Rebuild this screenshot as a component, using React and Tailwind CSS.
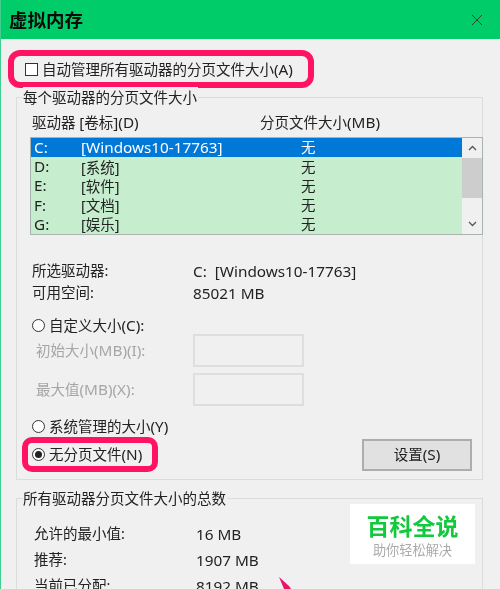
const drives = [
  { letter: "C:", name: "[Windows10-17763]", size: "无", selected: true },
  { letter: "D:", name: "[系统]", size: "无" },
  { letter: "E:", name: "[软件]", size: "无" },
  { letter: "F:", name: "[文档]", size: "无" },
  { letter: "G:", name: "[娱乐]", size: "无" },
];

// latin runs are a touch wider than the CJK next to them in the picture
function L({ children }) {
  return <span className="text-[15.3px]">{children}</span>;
}

function Radio({ checked }) {
  return (
    <span className="w-[13px] h-[13px] rounded-full border border-[#333] bg-white flex items-center justify-center shrink-0">
      {checked && <span className="w-[7px] h-[7px] rounded-full bg-[#222]" />}
    </span>
  );
}

function Scrollbar() {
  return (
    <div className="w-[20px] shrink-0 bg-[#f0f0f0] flex flex-col">
      <div className="h-[20px] flex items-center justify-center">
        <svg width="9" height="6" viewBox="0 0 9 6" fill="none" stroke="#555" strokeWidth="1.3">
          <path d="M1 5 L4.5 1.5 L8 5" />
        </svg>
      </div>
      <div className="h-[40px] bg-[#cdcdcd]" />
      <div className="flex-1" />
      <div className="h-[20px] flex items-center justify-center">
        <svg width="9" height="6" viewBox="0 0 9 6" fill="none" stroke="#555" strokeWidth="1.3">
          <path d="M1 1 L4.5 4.5 L8 1" />
        </svg>
      </div>
    </div>
  );
}

function DriveList() {
  return (
    <div className="mt-[5px] w-[453px] h-[98px] border border-[#a9b4ae] flex">
      <div className="flex-1 bg-[#c6edcd] text-[#222]">
        {drives.map((d) => (
          <div
            key={d.letter}
            className={`h-[19.2px] flex items-center leading-none ${d.selected ? "bg-[#0078d7] text-white" : ""}`}
          >
            <span className="w-[50px] pl-[3px] text-[15.3px]">{d.letter}</span>
            <span className="w-[220px]">
              {d.selected ? <L>{d.name}</L> : d.name}
            </span>
            <span>{d.size}</span>
          </div>
        ))}
      </div>
      <Scrollbar />
    </div>
  );
}

function SizeInput({ label, code }) {
  return (
    <div className="h-[33px] flex items-center text-[#a6a6a6]">
      <span className="w-[163px] pl-[6px]">
        {label}
        <L>{code}</L>
      </span>
      <div className="w-[111px] h-full border-2 border-[#dedede] bg-[#f0f0f0]" />
    </div>
  );
}

export default function App() {
  return (
    <div
      className="relative w-[500px] h-[589px] overflow-hidden bg-[#f0f0f0] border-l border-[#3fd08f] text-[14.5px] text-[#222] blur-[0.35px]"
      style={{ fontFamily: '"Noto Sans", "Noto Sans CJK SC", sans-serif' }}
    >
      <div className="-ml-px h-[39px] bg-[#00cc6a] flex items-center justify-between pl-[9px] pr-[17px]">
        <span className="text-[18.5px] font-bold text-[#0a0a0a]">虚拟内存</span>
        <svg width="12" height="12" viewBox="0 0 12 12" stroke="#1c4a34" strokeWidth="1">
          <path d="M1 1 L11 11 M11 1 L1 11" />
        </svg>
      </div>

      <div className="mt-[11px] ml-[7px] w-[306px] h-[38px] border-[6px] border-[#ff1464] rounded-[12px] flex items-center pl-[11px] gap-[4px] whitespace-nowrap">
        <span className="w-[13px] h-[13px] border border-[#333] bg-white shrink-0" />
        <span>
          自动管理所有驱动器的分页文件大小<L>(A)</L>
        </span>
      </div>

      <div className="relative mt-[9px] ml-[15px] w-[467px] h-[383px] border border-[#dcdcdc] pl-[13px] pt-[14px]">
        <span className="absolute left-[6px] -top-[11px] bg-[#f0f0f0] pr-[1px]">每个驱动器的分页文件大小</span>
        <div className="h-[20px] flex items-center">
          <span className="w-[230px] pl-[2px]">
            驱动器 <L>[</L>卷标<L>](D)</L>
          </span>
          <span>
            分页文件大小<L>(MB)</L>
          </span>
        </div>
        <DriveList />

        <div className="mt-[25px] h-[22px] flex items-center">
          <span className="w-[163px] pl-[2px]">所选驱动器:</span>
          <L>C:&nbsp; [Windows10-17763]</L>
        </div>
        <div className="h-[22px] flex items-center">
          <span className="w-[163px] pl-[2px]">可用空间:</span>
          <L>85021 MB</L>
        </div>

        <div className="mt-[11px] h-[20px] flex items-center gap-[4px] pl-[2px]">
          <Radio />
          <span>
            自定义大小<L>(C):</L>
          </span>
        </div>
        <div className="-mt-px">
          <SizeInput label="初始大小" code="(MB)(I):" />
        </div>
        <div className="mt-[6px]">
          <SizeInput label="最大值" code="(MB)(X):" />
        </div>

        <div className="mt-[10px] h-[20px] flex items-center gap-[4px] pl-[2px]">
          <Radio />
          <span>
            系统管理的大小<L>(Y)</L>
          </span>
        </div>

        <div className="mt-px flex items-center">
          <div className="-ml-[8px] w-[136px] h-[35px] border-[6px] border-[#ff1464] rounded-[10px] flex items-center pl-[4px] gap-[4px]">
            <Radio checked />
            <span>
              无分页文件<L>(N)</L>
            </span>
          </div>
          <button className="ml-[204px] w-[110px] h-[32px] bg-[#e1e1e1] border-2 border-[#adadad] text-[#222]">
            设置<L>(S)</L>
          </button>
        </div>
      </div>

      <div className="relative mt-[18px] ml-[15px] w-[467px] h-[120px] border border-[#dcdcdc] pl-[17px] pt-[22px]">
        <span className="absolute left-[6px] -top-[11px] bg-[#f0f0f0] pr-[1px]">所有驱动器分页文件大小的总数</span>
        {[
          ["允许的最小值:", "16 MB"],
          ["推荐:", "1907 MB"],
          ["当前已分配:", "8192 MB"],
        ].map(([label, value]) => (
          <div key={label} className="h-[26px] flex items-center">
            <span className="w-[162px]">{label}</span>
            <L>{value}</L>
          </div>
        ))}

        <div className="absolute left-[333px] top-[5px] w-[125px] h-[60px] bg-white pt-[7px] flex flex-col items-center">
          <span className="block text-[23px] leading-[31px] font-bold text-[#12c83c]">百科全说</span>
          <span className="block text-[13.2px] leading-[16px] text-[#aaaaaa]">助你轻松解决</span>
        </div>
      </div>

      <svg className="absolute left-[276px] top-[577px]" width="16" height="12" viewBox="0 0 16 12">
        <polygon points="2,0 12,9 14,12 7,12" fill="#e8146a" />
      </svg>
    </div>
  );
}
